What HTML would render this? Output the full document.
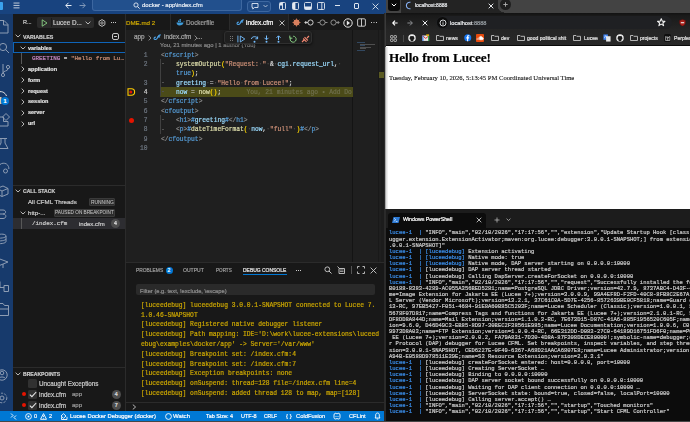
<!DOCTYPE html>
<html><head><meta charset="utf-8">
<style>
*{box-sizing:border-box;margin:0;padding:0}
html,body{width:690px;height:422px;overflow:hidden;background:#0c0c0c;font-family:"Liberation Sans",sans-serif;-webkit-text-stroke-width:0.2px}
.a{position:absolute}
.mono{font-family:"Liberation Mono",monospace}
.pre{white-space:pre;will-change:transform}
/* vscode */
#vs{left:0;top:0;width:384px;height:422px;background:#1f1f1f;overflow:hidden}
#title{left:0;top:0;width:384px;height:14px;background:#18437f}
#act{left:0;top:14px;width:13px;height:397px;background:#173a6c}
#side{left:13px;top:14px;width:113px;height:397px;background:#181818}
#tabs{left:126px;top:14px;width:258px;height:16px;background:#181818}
#editor{left:126px;top:30px;width:258px;height:232px;background:#1f1f1f}
#panel{left:126px;top:262px;width:258px;height:149px;background:#181818;border-top:1px solid #2b2b2b}
#status{left:0;top:411px;width:384px;height:10px;background:#0078d4}
/* browser */
#br{left:386px;top:0;width:304px;height:209px;background:#fff;overflow:hidden}
#brtabs{left:0;top:0;width:304px;height:12px;background:#3c3c3c}
#brtool{left:0;top:12px;width:304px;height:18px;background:#1f1f1f}
#brbm{left:0;top:30px;width:304px;height:16px;background:#1f1f1f}
/* terminal */
#term{left:386px;top:209px;width:304px;height:213px;background:#0c0c0c;overflow:hidden}
#ttabs{left:0;top:0;width:304px;height:19px;background:#202020}
</style></head><body>
<div id="vs" class="a">
  <div id="title" class="a">
    <div class="a" style="left:0;top:2px;width:3px;height:8px;background:#3aa2ee;border-radius:0 1px 1px 0"></div>
    <svg class="a" style="left:13px;top:2px" width="7" height="7" viewBox="0 0 7 7"><rect x="0.5" y="0.5" width="6" height="1.1" fill="#aebdd0"/><rect x="0.5" y="2.9" width="6" height="1.1" fill="#aebdd0"/><rect x="0.5" y="5.3" width="6" height="1.1" fill="#aebdd0"/></svg>
    <svg class="a" style="left:65px;top:2px" width="7" height="7" viewBox="0 0 7 7"><path d="M3.5 0.8 L0.8 3.5 L3.5 6.2 M0.8 3.5 H6.5" stroke="#e8eef6" stroke-width="1" fill="none"/></svg>
    <svg class="a" style="left:79px;top:2px" width="7" height="7" viewBox="0 0 7 7"><path d="M3.5 0.8 L6.2 3.5 L3.5 6.2 M6.2 3.5 H0.5" stroke="#7f97b8" stroke-width="1" fill="none"/></svg>
    <div class="a" style="left:92px;top:0px;width:150px;height:11px;background:#22508d;border:1px solid #3d67a0;border-top:none;border-radius:0 0 3px 3px"></div>
    <svg class="a" style="left:133px;top:2px" width="7" height="7" viewBox="0 0 7 7"><circle cx="3" cy="3" r="2.1" stroke="#dfe7f2" stroke-width="0.9" fill="none"/><path d="M4.5 4.5 L6.6 6.6" stroke="#dfe7f2" stroke-width="1"/></svg>
    <div class="a pre" style="left:142px;top:1px;font-size:6px;line-height:9px;color:#e6ecf4">docker - app\index.cfm</div>
    <div class="a" style="left:247px;top:1px;width:24px;height:11px;border:1px solid #3d67a0;border-radius:3px;background:#1f4a85"></div>
    <svg class="a" style="left:251px;top:2px" width="8" height="8" viewBox="0 0 8 8"><path d="M1 1.5 H7 V5.5 H3.5 L1.8 7 V5.5 H1 Z" stroke="#dfe7f2" stroke-width="0.9" fill="none"/></svg>
    <svg class="a" style="left:263px;top:4px" width="5" height="4" viewBox="0 0 5 4"><path d="M0.5 1 L2.5 3 L4.5 1" stroke="#c8d3e2" stroke-width="0.8" fill="none"/></svg>
    <svg class="a" style="left:279px;top:2px" width="7" height="8" viewBox="0 0 7 8"><rect x="0.5" y="0.5" width="6" height="7" rx="1" stroke="#e3e9f1" stroke-width="0.9" fill="none"/><path d="M3.5 0.5 V7.5" stroke="#e3e9f1" stroke-width="0.9"/><rect x="1" y="1" width="2.3" height="2.5" fill="#e3e9f1"/></svg>
    <svg class="a" style="left:291.5px;top:2px" width="7" height="8" viewBox="0 0 7 8"><rect x="0.5" y="0.5" width="6" height="7" rx="1" stroke="#e3e9f1" stroke-width="0.9" fill="none"/><rect x="0.8" y="0.8" width="2.6" height="6.4" fill="#e3e9f1"/></svg>
    <svg class="a" style="left:304px;top:2px" width="8" height="8" viewBox="0 0 8 8"><rect x="0.5" y="0.5" width="7" height="7" rx="1" stroke="#e3e9f1" stroke-width="0.9" fill="none"/><rect x="0.8" y="4.5" width="6.4" height="2.7" fill="#e3e9f1"/></svg>
    <svg class="a" style="left:316.5px;top:2px" width="8" height="8" viewBox="0 0 8 8"><rect x="0.5" y="0.5" width="7" height="7" rx="1" stroke="#e3e9f1" stroke-width="0.9" fill="none"/><path d="M4.8 0.5 V7.5" stroke="#e3e9f1" stroke-width="0.9"/></svg>
    <div class="a" style="left:335px;top:5px;width:5px;height:1px;background:#dde5ef"></div>
    <div class="a" style="left:353.5px;top:3px;width:5.5px;height:5.5px;border:1px solid #dde5ef;border-radius:1px"></div>
    <svg class="a" style="left:372px;top:2.5px" width="7" height="7" viewBox="0 0 7 7"><path d="M0.6 0.6 L6.4 6.4 M6.4 0.6 L0.6 6.4" stroke="#dde5ef" stroke-width="0.9"/></svg>
  </div>
  <div id="act" class="a">
    <svg class="a" style="left:0;top:0" width="13" height="397" viewBox="0 14 13 397" fill="none" stroke="#8d9cb3" stroke-width="1">
      <path d="M-3 20.5 H4 L8 24.5 V33 H-3 M3.5 20.5 V25 H8"/>
      <circle cx="3" cy="47" r="3.6"/><path d="M5.6 49.6 L9 53"/>
      <circle cx="8" cy="67" r="1.6"/><circle cx="3" cy="75" r="1.6"/><path d="M3 64 V73.4 M8 68.6 C8 72 3 70 3 73.4"/>
      <path d="M-3 92.5 C1 90.5 5 92 6.5 96" stroke="#e6e6e6"/><rect x="-1" y="97" width="2.5" height="7" fill="#d8c8b0" stroke="none"/>
      <path d="M-1 117 H3.5 V121.5 H8 V126 H-1 Z M6 113.5 L9.5 117 L6 120.5 L2.5 117 Z"/>
      <path d="M-2 138.5 H7 M1 138.5 V143 L-2 148.5 H8 L5 143 V138.5"/>
      <path d="M-3 172 C-3 165 2 161.5 6.5 164 C8.5 165.5 9 167.5 8.8 169"/><circle cx="5.5" cy="171" r="2"/>
      <path d="M-3 188.5 L3 186 L8 188.5 V194 L2 196.5 L-3 194 Z M-3 188.5 L2 191 L8 188.5 M2 191 V196.5"/>
      <path d="M-3 210 H3 C6.5 210 6.5 214 3 214 H-3 M3 214 C6.8 214 6.8 218.5 3 218.5 H-3"/>
      <path d="M-3 235 C1 233.5 6 234 6 236 C6 238 -1 238.5 -3 238 M6 236 V241.5 C6 243.5 -1 244 -3 243.5 M6 238.8 C6 240.8 -1 241.2 -3 240.8"/>
      <path d="M-3 258 L8 262 L-3 266.5 M3 264 V268"/>
      <path d="M0 281.5 V287.5 H4 M4 285.5 H8.5 V291.5 H4 Z"/>
      <path d="M-3 303.5 H3 L4.5 305.5 H8.5 V315.5 H-3 Z M-3 309 H8.5"/>
      <circle cx="2" cy="375" r="5.2"/><circle cx="2" cy="373" r="1.8"/><path d="M-1.5 378.5 C0 376.5 4 376.5 5.5 378.5"/>
      <circle cx="2" cy="398" r="2"/><circle cx="2" cy="398" r="4.8" stroke-dasharray="2.2 1.3"/>
    </svg>
    <div class="a" style="left:0.8px;top:82.8px;width:8.5px;height:8.5px;border-radius:50%;background:#0078d4;color:#fff;font-size:5.5px;line-height:8.5px;text-align:center;font-weight:bold">1</div>
  </div>
  <div id="side" class="a">
    <div class="a pre" style="left:10px;top:4px;font-size:5.5px;line-height:8px;color:#cccccc">R...</div>
    <div class="a" style="left:24px;top:3px;width:57px;height:11px;background:#2a2a2a;border-radius:2px"></div>
    <svg class="a" style="left:28px;top:5px" width="7" height="8" viewBox="0 0 7 8"><path d="M1.2 0.8 L6 4 L1.2 7.2 Z" stroke="#89d185" stroke-width="0.9" fill="none"/></svg>
    <div class="a" style="left:37.8px;top:4px;width:0.8px;height:9px;background:#1c1c1c"></div>
    <div class="a pre" style="left:40px;top:4.7px;font-size:6.3px;line-height:8px;color:#cccccc">Lucee D...</div>
    <svg class="a" style="left:72px;top:7px" width="6" height="4" viewBox="0 0 6 4"><path d="M0.6 0.7 L3 3 L5.4 0.7" stroke="#cccccc" stroke-width="0.9" fill="none"/></svg>
    <svg class="a" style="left:85px;top:5px" width="8" height="8" viewBox="0 0 8 8"><path d="M4 0.6 L6.9 2.3 V5.7 L4 7.4 L1.1 5.7 V2.3 Z" stroke="#cccccc" stroke-width="0.9" fill="none"/><circle cx="4" cy="4" r="1.2" stroke="#cccccc" stroke-width="0.8" fill="none"/></svg>
    <div class="a" style="left:98px;top:8px;width:1px;height:1px;background:#ccc;box-shadow:2px 0 #ccc,4px 0 #ccc"></div>
    <!-- VARIABLES header -->
    <svg class="a" style="left:2px;top:20px" width="6" height="4" viewBox="0 0 6 4"><path d="M0.6 0.7 L3 3 L5.4 0.7" stroke="#cccccc" stroke-width="0.9" fill="none"/></svg>
    <div class="a pre" style="left:10px;top:18.8px;font-size:5.3px;line-height:8px;color:#cccccc;font-weight:bold">VARIABLES</div>
    <div class="a" style="left:98.5px;top:18.8px;width:7.5px;height:7px;border:1px solid #c8c8c8;border-radius:2px"></div>
    <div class="a" style="left:100.5px;top:21.8px;width:3.5px;height:1px;background:#c8c8c8"></div>
    <!-- focus row -->
    <div class="a" style="left:0;top:28px;width:113px;height:11px;border:1px solid #0f64b8;background:#151515"></div>
    <svg class="a" style="left:7px;top:32px" width="6" height="4" viewBox="0 0 6 4"><path d="M0.6 0.7 L3 3 L5.4 0.7" stroke="#cccccc" stroke-width="0.9" fill="none"/></svg>
    <div class="a pre" style="left:14.5px;top:29.5px;font-size:5.5px;line-height:8px;color:#e0e0e0;font-weight:bold">variables</div>
    <div class="a" style="left:8px;top:39px;width:1px;height:11px;background:#585858"></div>
    <div class="a pre mono" style="left:19px;top:40.5px;font-size:5.9px;line-height:8px"><span style="color:#c586c0">GREETING</span><span style="color:#cccccc"> = </span><span style="color:#ce9178">"Hello from Lu…</span></div>
    <svg class="a" style="left:8px;top:52.3px" width="4" height="6" viewBox="0 0 4 6"><path d="M0.7 0.6 L3 3 L0.7 5.4" stroke="#cccccc" stroke-width="0.9" fill="none"/></svg>
    <div class="a pre" style="left:14.5px;top:50.8px;font-size:5.5px;line-height:8px;color:#e0e0e0;font-weight:bold">application</div>
    <svg class="a" style="left:8px;top:63.2px" width="4" height="6" viewBox="0 0 4 6"><path d="M0.7 0.6 L3 3 L0.7 5.4" stroke="#cccccc" stroke-width="0.9" fill="none"/></svg>
    <div class="a pre" style="left:14.5px;top:61.7px;font-size:5.5px;line-height:8px;color:#e0e0e0;font-weight:bold">form</div>
    <svg class="a" style="left:8px;top:74.0px" width="4" height="6" viewBox="0 0 4 6"><path d="M0.7 0.6 L3 3 L0.7 5.4" stroke="#cccccc" stroke-width="0.9" fill="none"/></svg>
    <div class="a pre" style="left:14.5px;top:72.5px;font-size:5.5px;line-height:8px;color:#e0e0e0;font-weight:bold">request</div>
    <svg class="a" style="left:8px;top:84.9px" width="4" height="6" viewBox="0 0 4 6"><path d="M0.7 0.6 L3 3 L0.7 5.4" stroke="#cccccc" stroke-width="0.9" fill="none"/></svg>
    <div class="a pre" style="left:14.5px;top:83.4px;font-size:5.5px;line-height:8px;color:#e0e0e0;font-weight:bold">session</div>
    <svg class="a" style="left:8px;top:95.7px" width="4" height="6" viewBox="0 0 4 6"><path d="M0.7 0.6 L3 3 L0.7 5.4" stroke="#cccccc" stroke-width="0.9" fill="none"/></svg>
    <div class="a pre" style="left:14.5px;top:94.2px;font-size:5.5px;line-height:8px;color:#e0e0e0;font-weight:bold">server</div>
    <svg class="a" style="left:8px;top:106.6px" width="4" height="6" viewBox="0 0 4 6"><path d="M0.7 0.6 L3 3 L0.7 5.4" stroke="#cccccc" stroke-width="0.9" fill="none"/></svg>
    <div class="a pre" style="left:14.5px;top:105.1px;font-size:5.5px;line-height:8px;color:#e0e0e0;font-weight:bold">url</div>
    <!-- CALL STACK -->
    <div class="a" style="left:0;top:171px;width:113px;height:1px;background:#2b2b2b"></div>
    <svg class="a" style="left:2px;top:175px" width="6" height="4" viewBox="0 0 6 4"><path d="M0.6 0.7 L3 3 L5.4 0.7" stroke="#cccccc" stroke-width="0.9" fill="none"/></svg>
    <div class="a pre" style="left:10px;top:173px;font-size:5.1px;line-height:8px;color:#cccccc;font-weight:bold">CALL STACK</div>
    <div class="a pre" style="left:15px;top:182.7px;font-size:6.1px;line-height:9px;color:#cccccc">All CFML Threads</div>
    <div class="a" style="left:76px;top:184px;width:26px;height:8px;background:#2c2c2c;border:1px solid #3a3a3a;border-radius:1px"></div>
    <div class="a pre" style="left:77.7px;top:184.5px;font-size:4.9px;line-height:7px;color:#c4c4c4;-webkit-text-stroke-width:0.05px">RUNNING</div>
    <svg class="a" style="left:7px;top:197px" width="6" height="4" viewBox="0 0 6 4"><path d="M0.6 0.7 L3 3 L5.4 0.7" stroke="#cccccc" stroke-width="0.9" fill="none"/></svg>
    <div class="a pre" style="left:15px;top:194px;font-size:6.1px;line-height:9px;color:#cccccc">http-...</div>
    <div class="a" style="left:41px;top:194.5px;width:61px;height:8px;background:#2c2c2c;border:1px solid #3a3a3a;border-radius:1px"></div>
    <div class="a pre" style="left:42px;top:195px;font-size:4.7px;line-height:7px;color:#c4c4c4;-webkit-text-stroke-width:0.05px">PAUSED ON BREAKPOINT</div>
    <div class="a" style="left:0;top:204px;width:113px;height:11px;background:#2d2d31"></div>
    <div class="a" style="left:8px;top:204px;width:1px;height:11px;background:#585858"></div>
    <div class="a pre mono" style="left:19px;top:205.5px;font-size:5.9px;line-height:8px;color:#cccccc">/index.cfm</div>
    <div class="a pre" style="left:66px;top:205.5px;font-size:6px;line-height:8px;color:#cccccc">index.cfm</div>
    <div class="a" style="left:98px;top:205px;width:9px;height:9px;border-radius:50%;background:#4d4d4d;color:#e0e0e0;font-size:5.3px;line-height:9px;text-align:center">4</div>
    <!-- BREAKPOINTS -->
    <div class="a" style="left:0;top:353px;width:113px;height:1px;background:#2b2b2b"></div>
    <svg class="a" style="left:2px;top:357.5px" width="6" height="4" viewBox="0 0 6 4"><path d="M0.6 0.7 L3 3 L5.4 0.7" stroke="#cccccc" stroke-width="0.9" fill="none"/></svg>
    <div class="a pre" style="left:10px;top:355.5px;font-size:5.1px;line-height:8px;color:#cccccc;font-weight:bold">BREAKPOINTS</div>
    <div class="a" style="left:15px;top:365px;width:9px;height:8.5px;background:#313131;border-radius:1.5px"></div>
    <div class="a pre" style="left:25.7px;top:364.8px;font-size:6.3px;line-height:9px;color:#cccccc">Uncaught Exceptions</div>
    <div class="a" style="left:8.5px;top:378px;width:4px;height:4px;border-radius:50%;background:#e51400"></div>
    <div class="a" style="left:15px;top:376px;width:9px;height:8.5px;background:#313131;border-radius:1.5px"></div>
    <svg class="a" style="left:15.8px;top:376.5px" width="8" height="7" viewBox="0 0 8 7"><path d="M0.8 3.6 L2.9 5.7 L7.2 1" stroke="#e8e8e8" stroke-width="1.1" fill="none"/></svg>
    <div class="a pre" style="left:25.7px;top:376px;font-size:6.3px;line-height:9px;color:#cccccc">index.cfm</div>
    <div class="a pre" style="left:58.8px;top:376px;font-size:6px;line-height:9px;color:#9d9d9d">app</div>
    <div class="a" style="left:98.8px;top:376px;width:9px;height:9px;border-radius:50%;background:#4d4d4d;color:#e0e0e0;font-size:5.3px;line-height:9px;text-align:center">4</div>
    <div class="a" style="left:8.5px;top:389px;width:4px;height:4px;border-radius:50%;background:#e51400"></div>
    <div class="a" style="left:15px;top:387px;width:9px;height:8.5px;background:#313131;border-radius:1.5px"></div>
    <svg class="a" style="left:15.8px;top:387.5px" width="8" height="7" viewBox="0 0 8 7"><path d="M0.8 3.6 L2.9 5.7 L7.2 1" stroke="#e8e8e8" stroke-width="1.1" fill="none"/></svg>
    <div class="a pre" style="left:25.7px;top:387px;font-size:6.3px;line-height:9px;color:#cccccc">index.cfm</div>
    <div class="a pre" style="left:58.8px;top:387px;font-size:6px;line-height:9px;color:#9d9d9d">app</div>
    <div class="a" style="left:98.8px;top:387px;width:9px;height:9px;border-radius:50%;background:#4d4d4d;color:#e0e0e0;font-size:5.3px;line-height:9px;text-align:center">7</div>
    <div class="a" style="left:112px;top:0;width:1px;height:397px;background:#2b2b2b"></div>
  </div>
  <div id="editor" class="a"></div>
  <!-- tabs -->
  <div class="a" style="left:126px;top:14px;width:258px;height:16px;background:#181818"></div>
  <div class="a pre" style="left:126.4px;top:18.5px;font-size:6.2px;line-height:8px;color:#cca700">DME.md 2</div>
  <div class="a" style="left:170px;top:14px;width:1px;height:16px;background:#2b2b2b"></div>
  <svg class="a" style="left:176px;top:19px" width="9" height="7" viewBox="0 0 9 7"><path d="M0.5 3.5 H7.5 C7.5 5.5 5.5 6.5 3.5 6.5 C1.5 6.5 0.5 5 0.5 3.5 Z M2 1.5 h1.3 v1.5 h-1.3 z M3.6 1.5 h1.3 v1.5 h-1.3 z M3.6 0 h1.3 v1.3 h-1.3 z M7 3 C7.5 2 8.3 2 8.8 2.5" fill="#3d9ad8" stroke="none"/></svg>
  <div class="a pre" style="left:186.2px;top:18.5px;font-size:6.4px;line-height:8px;color:#9d9d9d">Dockerfile</div>
  <div class="a" style="left:229px;top:14px;width:1px;height:16px;background:#2b2b2b"></div>
  <div class="a" style="left:230px;top:14px;width:58px;height:16px;background:#1f1f1f"></div>
  <div class="a" style="left:288px;top:14px;width:1px;height:16px;background:#2b2b2b"></div>
  <svg class="a" style="left:235.5px;top:19.3px" width="8" height="6.5" viewBox="0 0 8 6.5"><path d="M7.3 0.9 C5.6 0.9 5 2.5 4.5 3.8 C4 5.2 2.6 5.8 1.5 5.3 C0.6 4.8 1 3.4 2.4 3.1 M4.6 2.9 H6.6" stroke="#4da3e8" stroke-width="1.1" fill="none" stroke-linecap="round"/></svg>
  <div class="a pre" style="left:245.5px;top:18.5px;font-size:6.4px;line-height:8px;color:#ffffff">index.cfm</div>
  <svg class="a" style="left:279px;top:20px" width="6" height="6" viewBox="0 0 6 6"><path d="M0.6 0.6 L5.4 5.4 M5.4 0.6 L0.6 5.4" stroke="#d0d0d0" stroke-width="0.9"/></svg>
  <!-- tab actions -->
  <svg class="a" style="left:292px;top:18px" width="9" height="9" viewBox="0 0 9 9"><g stroke="#d9805e" stroke-width="0.8"><path d="M4.5 0.5 V8.5 M0.5 4.5 H8.5 M1.7 1.7 L7.3 7.3 M7.3 1.7 L1.7 7.3"/></g><circle cx="4.5" cy="4.5" r="3" fill="#d9805e"/></svg>
  <svg class="a" style="left:304px;top:19px" width="10" height="7" viewBox="0 0 10 7"><circle cx="6.5" cy="3.5" r="2.6" stroke="#e0e0e0" stroke-width="0.9" fill="none"/><path d="M3.9 3.5 H1 M2.3 2 L0.8 3.5 L2.3 5" stroke="#e0e0e0" stroke-width="0.9" fill="none"/></svg>
  <svg class="a" style="left:317px;top:19px" width="11" height="7" viewBox="0 0 11 7"><circle cx="5.5" cy="3.5" r="2.6" stroke="#9a9a9a" stroke-width="0.9" fill="none"/><path d="M2.9 3.5 H0.5 M8.1 3.5 H10.5" stroke="#9a9a9a" stroke-width="0.9"/></svg>
  <svg class="a" style="left:330px;top:19px" width="10" height="7" viewBox="0 0 10 7"><circle cx="3.5" cy="3.5" r="2.6" stroke="#9a9a9a" stroke-width="0.9" fill="none"/><path d="M6.1 3.5 H9 M7.7 2 L9.2 3.5 L7.7 5" stroke="#9a9a9a" stroke-width="0.9" fill="none"/></svg>
  <svg class="a" style="left:343px;top:17.5px" width="10" height="10" viewBox="0 0 10 10"><circle cx="5" cy="5" r="4.2" stroke="#e8e8e8" stroke-width="1" fill="none"/><path d="M3.8 2.5 V7.5 L7 5 Z" fill="#e8e8e8"/></svg>
  <svg class="a" style="left:356.5px;top:18px" width="9" height="9" viewBox="0 0 9 9"><rect x="0.6" y="0.8" width="7.8" height="7.4" rx="1.2" stroke="#d8d8d8" stroke-width="0.9" fill="none"/><path d="M4.5 0.8 V8.2" stroke="#d8d8d8" stroke-width="0.9"/></svg>
  <div class="a" style="left:370.5px;top:22px;width:1px;height:1px;background:#ccc;box-shadow:2.5px 0 #ccc,5px 0 #ccc"></div>
  <!-- breadcrumbs -->
  <div class="a pre" style="left:133.9px;top:33px;font-size:6.4px;line-height:8px;color:#a9a9a9">app</div>
  <svg class="a" style="left:148px;top:34.5px" width="4" height="6" viewBox="0 0 4 6"><path d="M0.7 0.6 L3 3 L0.7 5.4" stroke="#a9a9a9" stroke-width="0.8" fill="none"/></svg>
  <svg class="a" style="left:153px;top:34px" width="8" height="6.5" viewBox="0 0 8 6.5"><path d="M7.3 0.9 C5.6 0.9 5 2.5 4.5 3.8 C4 5.2 2.6 5.8 1.5 5.3 C0.6 4.8 1 3.4 2.4 3.1 M4.6 2.9 H6.6" stroke="#4da3e8" stroke-width="1.1" fill="none" stroke-linecap="round"/></svg>
  <div class="a pre" style="left:163.9px;top:33px;font-size:6.4px;line-height:8px;color:#a9a9a9">index.cfm</div>
  <svg class="a" style="left:193.5px;top:34.5px" width="4" height="6" viewBox="0 0 4 6"><path d="M0.7 0.6 L3 3 L0.7 5.4" stroke="#a9a9a9" stroke-width="0.8" fill="none"/></svg>
  <div class="a pre" style="left:196.8px;top:33px;font-size:6.4px;line-height:8px;color:#a9a9a9">...</div>
  <!-- codelens -->
  <div class="a pre" style="left:160px;top:41.5px;font-size:5.9px;line-height:7px;color:#8a8a8a">You, 21 minutes ago | 1 author (You)</div>
  <!-- gutter markers -->
  <svg class="a" style="left:127px;top:88px" width="9" height="8" viewBox="0 0 9 8"><path d="M1 0.8 H4.5 C6.5 0.8 7.6 2.5 7.6 4 C7.6 5.5 6.5 7.2 4.5 7.2 H1 Z" stroke="#ffcc00" stroke-width="1.1" fill="none"/><circle cx="3.8" cy="4" r="1.5" fill="#e51400"/></svg>
  <div class="a" style="left:129px;top:117.5px;width:5px;height:5px;border-radius:50%;background:#e51400"></div>
  <!-- minimap -->
  <div class="a" style="left:352px;top:30px;width:1px;height:232px;background:#141414"></div>
  <div class="a" style="left:357px;top:42px;width:18px;height:9px;opacity:.45;background:
    linear-gradient(#4a7bb0,#4a7bb0) 0 0/8px 1px no-repeat,
    linear-gradient(#8a8a8a,#8a8a8a) 3px 1.5px/15px 1px no-repeat,
    linear-gradient(#4a7bb0,#4a7bb0) 3px 3px/5px 1px no-repeat,
    linear-gradient(#8a8a8a,#8a8a8a) 3px 4.5px/11px 1px no-repeat,
    linear-gradient(#8a8a8a,#8a8a8a) 3px 6px/6px 1px no-repeat,
    linear-gradient(#4a7bb0,#4a7bb0) 0 7.5px/8px 1px no-repeat"></div>
  <div class="a" style="left:378px;top:30px;width:1px;height:232px;background:#191919"></div><div class="a" style="left:381px;top:30px;width:3px;height:232px;background:#1c1c1c"></div>
  <div class="a" style="left:379px;top:72px;width:5px;height:6px;background:#5a5a22"></div>
  <!-- debug toolbar -->
  <div class="a" style="left:224px;top:31px;width:88px;height:13px;background:#1f1f1f;border:1px solid #2f2f2f;border-radius:3px;box-shadow:0 1px 3px rgba(0,0,0,.6)"></div>
  <div class="a" style="left:229.5px;top:36px;width:1px;height:1px;background:#777;box-shadow:2px 0 #777,0 2px #777,2px 2px #777,0 4px #777,2px 4px #777"></div>
  <svg class="a" style="left:237px;top:34.5px" width="9" height="8" viewBox="0 0 9 8"><path d="M0.9 0.6 V7.4" stroke="#75beff" stroke-width="0.9"/><path d="M3.3 1 L7.8 4 L3.3 7 Z" stroke="#75beff" stroke-width="0.9" fill="none" stroke-linejoin="round"/></svg>
  <svg class="a" style="left:250px;top:34.5px" width="9" height="8" viewBox="0 0 9 8"><path d="M1.5 4 C1.5 1 7 1 7.5 3.5 M7.6 1.5 V3.8 H5.4" stroke="#75beff" stroke-width="1" fill="none"/><circle cx="4.5" cy="6.8" r="1" fill="#75beff"/></svg>
  <svg class="a" style="left:263px;top:34.5px" width="7" height="8" viewBox="0 0 7 8"><path d="M3.5 0.5 V4.5 M1.5 2.8 L3.5 4.8 L5.5 2.8" stroke="#75beff" stroke-width="1" fill="none"/><circle cx="3.5" cy="6.8" r="1" fill="#75beff"/></svg>
  <svg class="a" style="left:275px;top:34.5px" width="7" height="8" viewBox="0 0 7 8"><path d="M3.5 5 V1 M1.5 2.8 L3.5 0.8 L5.5 2.8" stroke="#75beff" stroke-width="1" fill="none"/><circle cx="3.5" cy="6.8" r="1" fill="#75beff"/></svg>
  <svg class="a" style="left:288.5px;top:34.5px" width="8" height="8" viewBox="0 0 8 8"><path d="M1.6 2.6 A3 3 0 1 0 4.2 1.2" stroke="#89d185" stroke-width="1" fill="none"/><path d="M0.8 0.6 V3.2 H3.4" stroke="#89d185" stroke-width="1" fill="none"/></svg>
  <svg class="a" style="left:301px;top:34.5px" width="9" height="8" viewBox="0 0 9 8"><path d="M1 7 L3 5 M8 1 L6 3 M2.2 3.5 L5.5 6.8 M3.5 2.2 L6.8 5.5" stroke="#f48771" stroke-width="1.1" fill="none"/></svg>
<div class="a" style="left:160px;top:87px;width:193px;height:9.5px;background:#4b4b18"></div>
<div class="a" style="left:160px;top:58.97px;width:1px;height:37.48px;background:#404040"></div>
<div class="a" style="left:160px;top:115.19px;width:1px;height:18.74px;background:#404040"></div>
<div class="a mono pre" style="left:127px;top:50.50px;width:20.5px;text-align:right;font-size:6.28px;line-height:9.37px;color:#6e7681">1</div>
<div class="a mono pre" style="left:160.60px;top:50.50px;font-size:6.28px;line-height:9.37px"><span style="color:#8c8c8c">&lt;</span><span style="color:#569cd6">cfscript</span><span style="color:#8c8c8c">&gt;</span></div>
<div class="a mono pre" style="left:127px;top:59.87px;width:20.5px;text-align:right;font-size:6.28px;line-height:9.37px;color:#6e7681">2</div>
<div class="a" style="left:162px;top:63.17px;width:2px;height:1px;background:#505050"></div>
<div class="a mono pre" style="left:175.68px;top:59.87px;font-size:6.28px;line-height:9.37px"><span style="color:#dcdcaa">systemOutput</span><span style="color:#ffd700">(</span><span style="color:#ce9178">"Request:</span><span style="color:#4a4a4a">·</span><span style="color:#ce9178">"</span><span style="color:#4a4a4a">·</span><span style="color:#d4d4d4">&amp;</span><span style="color:#4a4a4a">·</span><span style="color:#9cdcfe">cgi</span><span style="color:#d4d4d4">.</span><span style="color:#9cdcfe">request_url</span><span style="color:#d4d4d4">,</span><span style="color:#4a4a4a">·</span></div>
<div class="a mono pre" style="left:175.68px;top:69.24px;font-size:6.28px;line-height:9.37px"><span style="color:#569cd6">true</span><span style="color:#ffd700">)</span><span style="color:#d4d4d4">;</span></div>
<div class="a mono pre" style="left:127px;top:78.61px;width:20.5px;text-align:right;font-size:6.28px;line-height:9.37px;color:#6e7681">3</div>
<div class="a" style="left:162px;top:81.91px;width:2px;height:1px;background:#505050"></div>
<div class="a mono pre" style="left:175.68px;top:78.61px;font-size:6.28px;line-height:9.37px"><span style="color:#9cdcfe">greeting</span><span style="color:#4a4a4a">·</span><span style="color:#d4d4d4">=</span><span style="color:#4a4a4a">·</span><span style="color:#ce9178">"Hello</span><span style="color:#4a4a4a">·</span><span style="color:#ce9178">from</span><span style="color:#4a4a4a">·</span><span style="color:#ce9178">Lucee!"</span><span style="color:#d4d4d4">;</span></div>
<div class="a mono pre" style="left:127px;top:87.98px;width:20.5px;text-align:right;font-size:6.28px;line-height:9.37px;color:#cccccc">4</div>
<div class="a" style="left:162px;top:91.28px;width:2px;height:1px;background:#505050"></div>
<div class="a mono pre" style="left:175.68px;top:87.98px;font-size:6.28px;line-height:9.37px"><span style="color:#9cdcfe">now</span><span style="color:#4a4a4a">·</span><span style="color:#d4d4d4">=</span><span style="color:#4a4a4a">·</span><span style="color:#dcdcaa">now</span><span style="color:#ffd700">()</span><span style="color:#d4d4d4">;</span><span style="margin-left:25.4px;color:#6f6f4e">You, 21 minutes ago • Add Do</span></div>
<div class="a mono pre" style="left:127px;top:97.35px;width:20.5px;text-align:right;font-size:6.28px;line-height:9.37px;color:#6e7681">5</div>
<div class="a mono pre" style="left:160.60px;top:97.35px;font-size:6.28px;line-height:9.37px"><span style="color:#8c8c8c">&lt;/</span><span style="color:#569cd6">cfscript</span><span style="color:#8c8c8c">&gt;</span></div>
<div class="a mono pre" style="left:127px;top:106.72px;width:20.5px;text-align:right;font-size:6.28px;line-height:9.37px;color:#6e7681">6</div>
<div class="a mono pre" style="left:160.60px;top:106.72px;font-size:6.28px;line-height:9.37px"><span style="color:#8c8c8c">&lt;</span><span style="color:#569cd6">cfoutput</span><span style="color:#8c8c8c">&gt;</span></div>
<div class="a mono pre" style="left:127px;top:116.09px;width:20.5px;text-align:right;font-size:6.28px;line-height:9.37px;color:#6e7681">7</div>
<div class="a" style="left:162px;top:119.39px;width:2px;height:1px;background:#505050"></div>
<div class="a mono pre" style="left:175.68px;top:116.09px;font-size:6.28px;line-height:9.37px"><span style="color:#8c8c8c">&lt;</span><span style="color:#569cd6">h1</span><span style="color:#8c8c8c">&gt;</span><span style="color:#569cd6">#</span><span style="color:#9cdcfe">greeting</span><span style="color:#569cd6">#</span><span style="color:#8c8c8c">&lt;/</span><span style="color:#569cd6">h1</span><span style="color:#8c8c8c">&gt;</span></div>
<div class="a mono pre" style="left:127px;top:125.46px;width:20.5px;text-align:right;font-size:6.28px;line-height:9.37px;color:#6e7681">8</div>
<div class="a" style="left:162px;top:128.76px;width:2px;height:1px;background:#505050"></div>
<div class="a mono pre" style="left:175.68px;top:125.46px;font-size:6.28px;line-height:9.37px"><span style="color:#8c8c8c">&lt;</span><span style="color:#569cd6">p</span><span style="color:#8c8c8c">&gt;</span><span style="color:#569cd6">#</span><span style="color:#dcdcaa">dateTimeFormat</span><span style="color:#ffd700">(</span><span style="color:#4a4a4a">·</span><span style="color:#9cdcfe">now</span><span style="color:#d4d4d4">,</span><span style="color:#4a4a4a">·</span><span style="color:#ce9178">"full"</span><span style="color:#4a4a4a">·</span><span style="color:#ffd700">)</span><span style="color:#569cd6">#</span><span style="color:#8c8c8c">&lt;/</span><span style="color:#569cd6">p</span><span style="color:#8c8c8c">&gt;</span></div>
<div class="a mono pre" style="left:127px;top:134.83px;width:20.5px;text-align:right;font-size:6.28px;line-height:9.37px;color:#6e7681">9</div>
<div class="a mono pre" style="left:160.60px;top:134.83px;font-size:6.28px;line-height:9.37px"><span style="color:#8c8c8c">&lt;/</span><span style="color:#569cd6">cfoutput</span><span style="color:#8c8c8c">&gt;</span></div>
<div class="a mono pre" style="left:127px;top:144.20px;width:20.5px;text-align:right;font-size:6.28px;line-height:9.37px;color:#6e7681">10</div>

  <div id="panel" class="a"></div>
  <!-- panel -->
  <div class="a pre" style="left:136px;top:266.5px;font-size:4.9px;line-height:7px;color:#9d9d9d">PROBLEMS</div>
  <div class="a" style="left:165.5px;top:266.5px;width:7px;height:7px;border-radius:50%;background:#0078d4;color:#fff;font-size:5px;line-height:7px;text-align:center">2</div>
  <div class="a pre" style="left:183.3px;top:266.5px;font-size:5.05px;line-height:7px;color:#9d9d9d">OUTPUT</div>
  <div class="a pre" style="left:215.6px;top:266.5px;font-size:4.6px;line-height:7px;color:#9d9d9d">PORTS</div>
  <div class="a pre" style="left:243px;top:266.5px;font-size:4.97px;line-height:7px;color:#e7e7e7">DEBUG CONSOLE</div>
  <div class="a" style="left:243px;top:274px;width:43.5px;height:1px;background:#0078d4"></div>
  <div class="a" style="left:295.5px;top:270px;width:1px;height:1px;background:#ccc;box-shadow:2px 0 #ccc,4px 0 #ccc"></div>
  <svg class="a" style="left:324px;top:266px" width="8" height="8" viewBox="0 0 8 8"><circle cx="3.3" cy="3.3" r="2.4" stroke="#cccccc" stroke-width="0.9" fill="none"/><path d="M5 5 L7.5 7.5" stroke="#cccccc" stroke-width="1"/></svg>
  <svg class="a" style="left:337px;top:266px" width="8" height="8" viewBox="0 0 8 8"><path d="M2 2.5 H7.5 V7.5 H2 Z" stroke="#cccccc" stroke-width="0.9" fill="none"/><path d="M3 4 H6.5 M3 5.5 H6.5" stroke="#cccccc" stroke-width="0.7"/><path d="M0.5 0.5 L2.5 2.5" stroke="#cccccc" stroke-width="0.9"/></svg>
  <div class="a" style="left:351px;top:266px;width:1px;height:8px;background:#555"></div>
  <svg class="a" style="left:357px;top:266px" width="8" height="8" viewBox="0 0 8 8"><path d="M0.5 2.5 V0.5 H2.5 M5.5 0.5 H7.5 V2.5 M7.5 5.5 V7.5 H5.5 M2.5 7.5 H0.5 V5.5" stroke="#cccccc" stroke-width="0.9" fill="none"/></svg>
  <svg class="a" style="left:370px;top:266.5px" width="7" height="7" viewBox="0 0 7 7"><path d="M0.6 0.6 L6.4 6.4 M6.4 0.6 L0.6 6.4" stroke="#cccccc" stroke-width="0.9"/></svg>
  <div class="a" style="left:136px;top:283.5px;width:239px;height:11.5px;background:#2a2a2a;border-radius:2px"></div>
  <div class="a pre" style="left:139.6px;top:286.5px;font-size:5.75px;line-height:8px;color:#8f8f8f">Filter (e.g. text, !exclude, \escape)</div>
  <div class="a" style="left:126px;top:401.5px;width:258px;height:1px;background:#2b2b2b"></div>
  <svg class="a" style="left:132px;top:403.5px" width="5" height="6" viewBox="0 0 5 6"><path d="M0.8 0.6 L3.6 3 L0.8 5.4" stroke="#c5c5c5" stroke-width="0.9" fill="none"/></svg>
  <div class="a mono pre" style="left:141px;top:300.70px;font-size:6.3px;line-height:9.8px;color:#cca700">[luceedebug] luceedebug 3.0.0.1-SNAPSHOT connected to Lucee 7.</div>
  <div class="a mono pre" style="left:141px;top:310.50px;font-size:6.3px;line-height:9.8px;color:#cca700">1.0.46-SNAPSHOT</div>
  <div class="a mono pre" style="left:141px;top:320.30px;font-size:6.3px;line-height:9.8px;color:#cca700">[luceedebug] Registered native debugger listener</div>
  <div class="a mono pre" style="left:141px;top:330.10px;font-size:6.3px;line-height:9.8px;color:#cca700">[luceedebug] Path mapping: IDE='D:\work\lucee-extensions\luceed</div>
  <div class="a mono pre" style="left:141px;top:339.90px;font-size:6.3px;line-height:9.8px;color:#cca700">ebug\examples\docker/app' -&gt; Server='/var/www'</div>
  <div class="a mono pre" style="left:141px;top:349.70px;font-size:6.3px;line-height:9.8px;color:#cca700">[luceedebug] Breakpoint set: /index.cfm:4</div>
  <div class="a mono pre" style="left:141px;top:359.50px;font-size:6.3px;line-height:9.8px;color:#cca700">[luceedebug] Breakpoint set: /index.cfm:7</div>
  <div class="a mono pre" style="left:141px;top:369.30px;font-size:6.3px;line-height:9.8px;color:#cca700">[luceedebug] Exception breakpoints: none</div>
  <div class="a mono pre" style="left:141px;top:379.10px;font-size:6.3px;line-height:9.8px;color:#cca700">[luceedebug] onSuspend: thread=128 file=/index.cfm line=4</div>
  <div class="a mono pre" style="left:141px;top:388.90px;font-size:6.3px;line-height:9.8px;color:#cca700">[luceedebug] onSuspend: added thread 128 to map, map=[128]</div>

  <div id="status" class="a">
    <svg class="a" style="left:9.5px;top:1.5px" width="7" height="7" viewBox="0 0 7 7"><path d="M1 0.5 L3 2.5 L1 4.5 M6 2.5 L4 4.5 L6 6.5" stroke="#fff" stroke-width="0.9" fill="none"/></svg>
    <svg class="a" style="left:25px;top:1.5px" width="7" height="7" viewBox="0 0 7 7"><circle cx="3.5" cy="3.5" r="2.9" stroke="#fff" stroke-width="0.9" fill="none"/><circle cx="3.5" cy="3.5" r="1" fill="#fff"/></svg>
    <div class="a pre" style="left:34px;top:1px;font-size:5.6px;line-height:8px;color:#fff">0</div>
    <svg class="a" style="left:40px;top:1.5px" width="7" height="7" viewBox="0 0 7 7"><path d="M3.5 0.6 L6.5 6.3 H0.5 Z" stroke="#fff" stroke-width="0.9" fill="none"/><path d="M3.5 2.5 V4.2 M3.5 5 V5.6" stroke="#fff" stroke-width="0.8"/></svg>
    <div class="a pre" style="left:48.6px;top:1px;font-size:5.6px;line-height:8px;color:#fff">2</div>
    <svg class="a" style="left:60px;top:1.5px" width="8" height="7" viewBox="0 0 8 7"><path d="M1 3 L3.5 0.7 L6 3 L3.5 5.3 Z M1.5 4.2 V6.5 H7 V3.8" stroke="#fff" stroke-width="0.9" fill="none"/></svg>
    <div class="a pre" style="left:69.7px;top:1px;font-size:5.82px;line-height:8px;color:#fff">Lucee Docker Debugger (docker)</div>
    <svg class="a" style="left:164.5px;top:1.5px" width="7" height="7" viewBox="0 0 7 7"><circle cx="3.5" cy="3.5" r="2.9" stroke="#fff" stroke-width="0.9" fill="none"/></svg>
    <div class="a pre" style="left:172.6px;top:1px;font-size:6.1px;line-height:8px;color:#fff">Watch</div>
    <div class="a pre" style="left:206px;top:1px;font-size:5.46px;line-height:8px;color:#fff">Tab Size: 4</div>
    <div class="a pre" style="left:240.9px;top:1px;font-size:5.5px;line-height:8px;color:#fff">UTF-8</div>
    <div class="a pre" style="left:263.8px;top:1px;font-size:5px;line-height:8px;color:#fff">CRLF</div>
    <div class="a pre" style="left:285.5px;top:1px;font-size:6px;line-height:8px;color:#fff">{ }</div>
    <div class="a pre" style="left:295.8px;top:1px;font-size:5.8px;line-height:8px;color:#fff">ColdFusion</div>
    <svg class="a" style="left:333px;top:1px" width="8" height="8" viewBox="0 0 8 8"><path d="M1 3 C1 1 3 0.8 4 2 C5 0.8 7 1 7 3 V5.5 C7 7 5.5 7.5 4 6.5 C2.5 7.5 1 7 1 5.5 Z" stroke="#fff" stroke-width="0.9" fill="none"/><path d="M3 4 V5 M5 4 V5" stroke="#fff" stroke-width="0.8"/></svg>
    <div class="a pre" style="left:348.7px;top:1px;font-size:5.67px;line-height:8px;color:#fff">CFLint</div>
    <svg class="a" style="left:373.5px;top:1px" width="7" height="8" viewBox="0 0 7 8"><path d="M1 6 H6 L5.3 5 V3 C5.3 1.8 4.5 1 3.5 1 C2.5 1 1.7 1.8 1.7 3 V5 Z M2.7 7 H4.3" stroke="#fff" stroke-width="0.9" fill="none"/></svg>
  </div>
  
</div>
<div id="br" class="a">
  <div class="a" style="left:0;top:0;width:304px;height:13px;background:#434343"></div>
  <div class="a" style="left:2px;top:0;width:11.5px;height:10.5px;background:#0a0a0a;border-radius:0 0 3px 3px"></div>
  <svg class="a" style="left:5px;top:3px" width="6" height="4" viewBox="0 0 6 4"><path d="M0.8 0.8 L3 3 L5.2 0.8" stroke="#fff" stroke-width="1" fill="none"/></svg>
  <div class="a" style="left:15px;top:0;width:97px;height:13px;background:#232323;border-radius:0 0 0 0"></div>
  <div class="a" style="left:112px;top:6px;width:6px;height:7px;background:radial-gradient(circle at 100% 0,#434343 6px,#232323 6.5px)"></div>
  <svg class="a" style="left:18.5px;top:1px" width="7" height="9" viewBox="0 0 7 9"><path d="M5.5 1.3 A3.3 3.3 0 1 0 5.5 7.7" stroke="#8ab4f8" stroke-width="1.1" fill="none"/></svg>
  <div class="a pre" style="left:29px;top:1.3px;font-size:5px;line-height:8px;color:#e8eaed">localhost:8888</div>
  <svg class="a" style="left:102px;top:2.5px" width="6" height="6" viewBox="0 0 6 6"><path d="M0.7 0.7 L5.3 5.3 M5.3 0.7 L0.7 5.3" stroke="#e8eaed" stroke-width="1"/></svg>
  <div class="a" style="left:114.3px;top:-0.7px;width:11px;height:11px;border-radius:50%;background:#1e1e1e"></div>
  <svg class="a" style="left:117.3px;top:2.3px" width="5" height="5" viewBox="0 0 5 5"><path d="M2.5 0.3 V4.7 M0.3 2.5 H4.7" stroke="#b0b0b0" stroke-width="0.9"/></svg>
  <!-- toolbar -->
  <div class="a" style="left:0;top:13px;width:304px;height:33px;background:linear-gradient(#121212 0px,#1a1a1a 3px,#252525 17px,#282828 33px)"></div>
  <svg class="a" style="left:5.5px;top:19.5px" width="6" height="6" viewBox="0 0 6 6"><path d="M3 0.6 L0.7 3 L3 5.4 M0.7 3 H5.6" stroke="#ffffff" stroke-width="1.15" fill="none"/></svg>
  <svg class="a" style="left:20.5px;top:19.5px" width="6" height="6" viewBox="0 0 6 6"><path d="M3 0.6 L5.3 3 L3 5.4 M5.3 3 H0.4" stroke="#8a8c8f" stroke-width="1" fill="none"/></svg>
  <svg class="a" style="left:35.5px;top:19.5px" width="6" height="6" viewBox="0 0 6 6"><path d="M0.7 0.7 L5.3 5.3 M5.3 0.7 L0.7 5.3" stroke="#e8eaed" stroke-width="1"/></svg>
  <div class="a" style="left:49.5px;top:15.5px;width:236px;height:13.5px;background:#1f2023;border-radius:7px"></div>
  <div class="a" style="left:50.5px;top:16.5px;width:11.5px;height:11.5px;background:#0c0c0c;border-radius:50%"></div>
  <svg class="a" style="left:52.5px;top:18.5px" width="8" height="8" viewBox="0 0 8 8"><circle cx="4" cy="4" r="3" stroke="#e8eaed" stroke-width="0.9" fill="none"/><path d="M4 3.3 V5.8 M4 2.2 V2.6" stroke="#e8eaed" stroke-width="0.9"/></svg>
  <div class="a pre" style="left:63.6px;top:18.6px;font-size:5.66px;line-height:8px;color:#e8eaed">localhost<span style="color:#9aa0a6">:8888</span></div>
  <svg class="a" style="left:271px;top:18px" width="8.5" height="8.5" viewBox="0 0 8 8"><path d="M4 0.6 L5 3 L7.5 3.1 L5.5 4.7 L6.2 7.2 L4 5.8 L1.8 7.2 L2.5 4.7 L0.5 3.1 L3 3 Z" stroke="#f0f0f0" stroke-width="1" fill="none" stroke-linejoin="round"/></svg>
  <svg class="a" style="left:292.8px;top:18.8px" width="7" height="7.5" viewBox="0 0 8 9"><path d="M4 0.5 L7.5 1.8 V4.5 C7.5 6.5 6 7.8 4 8.5 C2 7.8 0.5 6.5 0.5 4.5 V1.8 Z" fill="#a8201a" stroke="#5a0e0e" stroke-width="0.6"/><rect x="2" y="3.8" width="4" height="1.3" fill="#f0f0f0"/></svg>
  <!-- bookmarks -->
  <svg class="a" style="left:4px;top:34.5px" width="7" height="7" viewBox="0 0 8 8" fill="none" stroke="#c8c8c8" stroke-width="1"><rect x="0.6" y="0.6" width="2.8" height="2.8" rx="0.8"/><rect x="4.6" y="0.6" width="2.8" height="2.8" rx="0.8"/><rect x="0.6" y="4.6" width="2.8" height="2.8" rx="0.8"/><rect x="4.6" y="4.6" width="2.8" height="2.8" rx="0.8"/></svg>
  <div class="a" style="left:17px;top:34.5px;width:1px;height:7px;background:#4a4a4a"></div>
  <svg class="a" style="left:22.3px;top:34px" width="8" height="8" viewBox="0 0 9 9"><circle cx="4.5" cy="4.5" r="4.2" fill="#f0f0f0"/><path d="M3 8.2 V6.6 C2 6.4 1.8 5.6 1.8 4.6 C1.8 3.8 2.2 3.2 2.6 3 L2.5 1.9 L3.6 2.5 C4.2 2.3 4.8 2.3 5.4 2.5 L6.5 1.9 L6.4 3 C6.8 3.2 7.2 3.8 7.2 4.6 C7.2 5.6 7 6.4 6 6.6 V8.2" fill="#1a1a1a"/></svg>
  <svg class="a" style="left:36px;top:34px" width="7.5" height="8" viewBox="0 0 9 9"><rect x="0.5" y="1.5" width="8" height="6.5" fill="#e8e8e8"/><path d="M0.5 1.5 L4.5 5 L8.5 1.5" stroke="#d93025" stroke-width="1.2" fill="none"/><rect x="0.5" y="1.5" width="1.3" height="6.5" fill="#4285f4"/><rect x="7.2" y="1.5" width="1.3" height="6.5" fill="#34a853"/><rect x="5" y="0.2" width="3.5" height="1.6" fill="#fbbc04"/></svg>
  <svg class="a" style="left:50.1px;top:35px" width="8" height="6" viewBox="0 0 8 6"><path d="M0.5 0.5 H3 L3.8 1.3 H7.5 V5.5 H0.5 Z" stroke="#c4c4c4" stroke-width="0.9" fill="none"/></svg>
  <div class="a pre" style="left:60px;top:34px;font-size:5.1px;line-height:8px;color:#e3e3e3">news</div>
  <svg class="a" style="left:78px;top:34.2px" width="7.5" height="7.5" viewBox="0 0 9 9"><circle cx="4.5" cy="4.5" r="4.2" fill="#1877f2"/><path d="M5 8.6 V5.3 H6.1 L6.3 4 H5 V3.3 C5 2.9 5.2 2.7 5.6 2.7 H6.3 V1.6 C6 1.5 5.6 1.5 5.2 1.5 C4.2 1.5 3.7 2.1 3.7 3.1 V4 H2.7 V5.3 H3.7 V8.6" fill="#fff"/></svg>
  <svg class="a" style="left:90.4px;top:34px" width="8" height="8" viewBox="0 0 9 9"><rect x="0" y="0" width="9" height="9" rx="1" fill="#e84a0c"/><path d="M1.2 6.5 V5 M2.4 6.5 V4.2 M3.6 6.5 V3.5 M4.3 6.5 V3 C5 2.4 6.8 2.6 7 4 C8 4 8.3 4.6 8.2 5.4 C8.1 6.2 7.5 6.5 7 6.5 Z" stroke="#fff" stroke-width="0.7" fill="#fff"/></svg>
  <svg class="a" style="left:104.9px;top:35px" width="8" height="6" viewBox="0 0 8 6"><path d="M0.5 0.5 H3 L3.8 1.3 H7.5 V5.5 H0.5 Z" stroke="#c4c4c4" stroke-width="0.9" fill="none"/></svg>
  <div class="a pre" style="left:115px;top:34px;font-size:5.1px;line-height:8px;color:#e3e3e3">dev</div>
  <svg class="a" style="left:131.2px;top:35px" width="8" height="6" viewBox="0 0 8 6"><path d="M0.5 0.5 H3 L3.8 1.3 H7.5 V5.5 H0.5 Z" stroke="#c4c4c4" stroke-width="0.9" fill="none"/></svg>
  <div class="a pre" style="left:140.9px;top:34px;font-size:5.1px;line-height:8px;color:#e3e3e3">good political shit</div>
  <svg class="a" style="left:187px;top:35px" width="8" height="6" viewBox="0 0 8 6"><path d="M0.5 0.5 H3 L3.8 1.3 H7.5 V5.5 H0.5 Z" stroke="#c4c4c4" stroke-width="0.9" fill="none"/></svg>
  <div class="a pre" style="left:197.8px;top:34px;font-size:5.1px;line-height:8px;color:#e3e3e3">Lucee</div>
  <svg class="a" style="left:216.7px;top:34px" width="8" height="8" viewBox="0 0 9 9"><rect x="0.5" y="0.5" width="5" height="6" fill="#4285f4"/><rect x="3.5" y="2.5" width="5" height="6" fill="#e8e8e8"/><path d="M1.5 4.5 L3 1.8 L4.4 4.5" stroke="#fff" stroke-width="0.6" fill="none"/></svg>
  <svg class="a" style="left:229.6px;top:34px" width="8" height="8" viewBox="0 0 9 9"><circle cx="4.5" cy="4.5" r="4.2" fill="#f0f0f0"/><path d="M3 8.2 V6.6 C2 6.4 1.8 5.6 1.8 4.6 C1.8 3.8 2.2 3.2 2.6 3 L2.5 1.9 L3.6 2.5 C4.2 2.3 4.8 2.3 5.4 2.5 L6.5 1.9 L6.4 3 C6.8 3.2 7.2 3.8 7.2 4.6 C7.2 5.6 7 6.4 6 6.6 V8.2" fill="#1a1a1a"/></svg>
  <svg class="a" style="left:244px;top:35px" width="8" height="6" viewBox="0 0 8 6"><path d="M0.5 0.5 H3 L3.8 1.3 H7.5 V5.5 H0.5 Z" stroke="#c4c4c4" stroke-width="0.9" fill="none"/></svg>
  <div class="a pre" style="left:253.8px;top:34px;font-size:5.1px;line-height:8px;color:#e3e3e3">projects</div>
  <div class="a" style="left:277.9px;top:34px;width:7.5px;height:8px;background:#0e0e0e;border-radius:2px"></div>
  <svg class="a" style="left:279px;top:35.5px" width="5.5" height="5" viewBox="0 0 6 6"><path d="M0.5 0.5 L3 2.5 L5.5 0.5 V5.5 H0.5 Z M3 0.5 V5.5" stroke="#e0e0e0" stroke-width="0.8" fill="none"/></svg>
  <div class="a pre" style="left:287.7px;top:34px;font-size:5.1px;line-height:8px;color:#e3e3e3">Perplexity</div>
    <div class="a" style="left:0;top:44.8px;width:304px;height:1.7px;background:#0a0a0a"></div>
  <!-- page -->
  <div class="a" style="left:0;top:46.5px;width:304px;height:162.5px;background:#ffffff"></div>
  <div class="a" style="left:0;top:46.5px;width:2px;height:162.5px;background:linear-gradient(90deg,#d8d8d8,#f6f6f6)"></div>
  <div class="a pre" style="left:3px;top:50px;font-family:'Liberation Serif',serif;font-weight:bold;font-size:13.15px;line-height:15px;color:#000">Hello from Lucee!</div>
  <div class="a pre" style="left:3px;top:72.5px;font-family:'Liberation Serif',serif;font-size:6.62px;line-height:9px;color:#111;-webkit-text-stroke-width:0.1px">Tuesday, February 10, 2026, 5:13:45 PM Coordinated Universal Time</div>
</div>
<div class="a" style="left:384px;top:0;width:2px;height:13px;background:#18437f"></div>
<div class="a" style="left:384px;top:13px;width:1px;height:409px;background:#2a2a2a"></div>
<div class="a" style="left:385px;top:13px;width:1px;height:196px;background:#3a3a3a"></div>
<div class="a" style="left:385px;top:46.5px;width:1px;height:162.5px;background:#a8a8a8"></div>
<div class="a" style="left:385px;top:209px;width:1px;height:213px;background:#2a2a2a"></div>
<div id="term" class="a">
  <div class="a" style="left:0;top:0;width:304px;height:213px;background:#1c1c1c"></div>
  <div class="a" style="left:2.3px;top:3.7px;width:98px;height:20px;background:#0c0c0c;border-radius:3px 3px 0 0"></div>
  <div class="a" style="left:0;top:19px;width:304px;height:194px;background:#0c0c0c"></div>
  <svg class="a" style="left:5.5px;top:7.8px" width="8" height="6" viewBox="0 0 8 6"><path d="M1.5 0 H8 L6.5 6 H0 Z" fill="#2c7ad6"/><path d="M2 1.2 L3.8 2.8 L1.8 4.3 M3.8 4.5 H5.5" stroke="#fff" stroke-width="0.6" fill="none"/></svg>
  <div class="a pre" style="left:17.1px;top:7px;font-size:5.25px;line-height:7px;color:#ffffff">Windows PowerShell</div>
  <svg class="a" style="left:89.5px;top:7.5px" width="6" height="6" viewBox="0 0 6 6"><path d="M0.7 0.7 L5.3 5.3 M5.3 0.7 L0.7 5.3" stroke="#e0e0e0" stroke-width="0.8"/></svg>
  <svg class="a" style="left:107.5px;top:7.5px" width="6" height="6" viewBox="0 0 6 6"><path d="M3 0.5 V5.5 M0.5 3 H5.5" stroke="#b8b8b8" stroke-width="0.8"/></svg>
  <svg class="a" style="left:119.5px;top:9px" width="5" height="3.5" viewBox="0 0 5 3.5"><path d="M0.6 0.6 L2.5 2.6 L4.4 0.6" stroke="#b8b8b8" stroke-width="0.8" fill="none"/></svg>
  <div class="a mono pre" style="left:2.8px;top:21.40px;font-size:5.5px;line-height:6.17px"><span style="color:#3b8eea">lucee-1  | </span><span style="color:#cccccc">"INFO","main","02/10/2026","17:17:56","","extension","Update Startup Hook [class org.lu</span></div>
  <div class="a mono pre" style="left:2.8px;top:27.57px;font-size:5.5px;line-height:6.17px"><span style="color:#cccccc">ugger.extension.ExtensionActivator;maven:org.lucee:debugger:3.0.0.1-SNAPSHOT;] from extension</span></div>
  <div class="a mono pre" style="left:2.8px;top:33.74px;font-size:5.5px;line-height:6.17px"><span style="color:#cccccc">.0.0.1-SNAPSHOT]"</span></div>
  <div class="a mono pre" style="left:2.8px;top:39.91px;font-size:5.5px;line-height:6.17px"><span style="color:#3b8eea">lucee-1  | </span><span style="color:#3b8eea">[luceedebug]</span><span style="color:#cccccc"> Extension activating</span></div>
  <div class="a mono pre" style="left:2.8px;top:46.08px;font-size:5.5px;line-height:6.17px"><span style="color:#3b8eea">lucee-1  | </span><span style="color:#3b8eea">[luceedebug]</span><span style="color:#cccccc"> Native mode: true</span></div>
  <div class="a mono pre" style="left:2.8px;top:52.25px;font-size:5.5px;line-height:6.17px"><span style="color:#3b8eea">lucee-1  | </span><span style="color:#3b8eea">[luceedebug]</span><span style="color:#cccccc"> Native mode, DAP server starting on 0.0.0.0:10000</span></div>
  <div class="a mono pre" style="left:2.8px;top:58.42px;font-size:5.5px;line-height:6.17px"><span style="color:#3b8eea">lucee-1  | </span><span style="color:#cccccc">[luceedebug] DAP server thread started</span></div>
  <div class="a mono pre" style="left:2.8px;top:64.59px;font-size:5.5px;line-height:6.17px"><span style="color:#3b8eea">lucee-1  | </span><span style="color:#cccccc">[luceedebug] Calling DapServer.createForSocket on 0.0.0.0:10000</span></div>
  <div class="a mono pre" style="left:2.8px;top:70.76px;font-size:5.5px;line-height:6.17px"><span style="color:#3b8eea">lucee-1  | </span><span style="color:#cccccc">"INFO","main","02/10/2026","17:17:56","","request","Successfully installed the features</span></div>
  <div class="a mono pre" style="left:2.8px;top:76.93px;font-size:5.5px;line-height:6.17px"><span style="color:#cccccc">B0188-8383-4289-AC055A356BED5281;name=PostgreSQL JDBC Driver;version=42.7.9, 8737ABC4-D43F-4</span></div>
  <div class="a mono pre" style="left:2.8px;top:83.10px;font-size:5.5px;line-height:6.17px"><span style="color:#cccccc">me=Image Extension for Jakarta EE (Lucee 7+);version=3.0.0.9, 99A4EF8D-F2FD-40C8-8FB8C2E67A</span></div>
  <div class="a mono pre" style="left:2.8px;top:89.27px;font-size:5.5px;line-height:6.17px"><span style="color:#cccccc">L Server (Vendor Microsoft);version=13.2.1, 37C61C0A-5D7E-4256-8572639BE0CF5818;name=Guard e</span></div>
  <div class="a mono pre" style="left:2.8px;top:95.44px;font-size:5.5px;line-height:6.17px"><span style="color:#cccccc">13-RC, 97EB5427-F051-4684-91E8A60B85C5203F;name=Lucee Scheduler (Classic);version=1.0.0.1, 8</span></div>
  <div class="a mono pre" style="left:2.8px;top:101.61px;font-size:5.5px;line-height:6.17px"><span style="color:#cccccc">5678F07D817;name=Compress Tags and functions for Jakarta EE (Lucee 7+);version=2.1.0.1-RC, 5</span></div>
  <div class="a mono pre" style="left:2.8px;top:107.78px;font-size:5.5px;line-height:6.17px"><span style="color:#cccccc">DF8DD8A844D;name=Mail Extension;version=1.1.0.3-RC, 7E673D15-D87C-41A6-885F1956520C605F;name</span></div>
  <div class="a mono pre" style="left:2.8px;top:113.95px;font-size:5.5px;line-height:6.17px"><span style="color:#cccccc">ion=9.6.0, D46D49C3-EB85-8D97-30BEC2F38561E985;name=Lucee Documentation;version=1.0.0.6, C0</span></div>
  <div class="a mono pre" style="left:2.8px;top:120.12px;font-size:5.5px;line-height:6.17px"><span style="color:#cccccc">9973D8A03;name=FTP Extension;version=1.0.0.4-RC, 66E312DD-D083-27C0-64189D16751FD6F0;name=PO</span></div>
  <div class="a mono pre" style="left:2.8px;top:126.29px;font-size:5.5px;line-height:6.17px"><span style="color:#cccccc"> EE (Lucee 7+);version=2.0.0.2, FA79A831-7D30-4D8A-87F308DECE80000!;symbolic-name=debugger;e</span></div>
  <div class="a mono pre" style="left:2.8px;top:132.46px;font-size:5.5px;line-height:6.17px"><span style="color:#cccccc">r Protocol (DAP) debugger for Lucee CFML. Set breakpoints, inspect variables, and step three</span></div>
  <div class="a mono pre" style="left:2.8px;top:138.63px;font-size:5.5px;line-height:6.17px"><span style="color:#cccccc">sion=3.0.0.1-SNAPSHOT, CED6227E-0F49-6367-A68D21AACA6807E8;name=Lucee Administrator;version</span></div>
  <div class="a mono pre" style="left:2.8px;top:144.80px;font-size:5.5px;line-height:6.17px"><span style="color:#cccccc">A94B-E0588D978511E39E;name=S3 Resource Extension;version=2.0.3.1"</span></div>
  <div class="a mono pre" style="left:2.8px;top:150.97px;font-size:5.5px;line-height:6.17px"><span style="color:#3b8eea">lucee-1  | </span><span style="color:#cccccc">[luceedebug] createForSocket entered: host=0.0.0.0, port=10000</span></div>
  <div class="a mono pre" style="left:2.8px;top:157.14px;font-size:5.5px;line-height:6.17px"><span style="color:#3b8eea">lucee-1  | </span><span style="color:#cccccc">[luceedebug] Creating ServerSocket …</span></div>
  <div class="a mono pre" style="left:2.8px;top:163.31px;font-size:5.5px;line-height:6.17px"><span style="color:#3b8eea">lucee-1  | </span><span style="color:#cccccc">[luceedebug] Binding to 0.0.0.0:10000</span></div>
  <div class="a mono pre" style="left:2.8px;top:169.48px;font-size:5.5px;line-height:6.17px"><span style="color:#3b8eea">lucee-1  | </span><span style="color:#cccccc">[luceedebug] DAP server socket bound successfully on 0.0.0.0:10000</span></div>
  <div class="a mono pre" style="left:2.8px;top:175.65px;font-size:5.5px;line-height:6.17px"><span style="color:#3b8eea">lucee-1  | </span><span style="color:#cccccc">[luceedebug] Waiting for DAP client connection on 0.0.0.0:10000 …</span></div>
  <div class="a mono pre" style="left:2.8px;top:181.82px;font-size:5.5px;line-height:6.17px"><span style="color:#3b8eea">lucee-1  | </span><span style="color:#cccccc">[luceedebug] ServerSocket state: bound=true, closed=false, localPort=10000</span></div>
  <div class="a mono pre" style="left:2.8px;top:187.99px;font-size:5.5px;line-height:6.17px"><span style="color:#3b8eea">lucee-1  | </span><span style="color:#cccccc">[luceedebug] Calling server.accept() …</span></div>
  <div class="a mono pre" style="left:2.8px;top:194.16px;font-size:5.5px;line-height:6.17px"><span style="color:#3b8eea">lucee-1  | </span><span style="color:#cccccc">"INFO","main","02/10/2026","17:17:56","","startup","Touched monitors"</span></div>
  <div class="a mono pre" style="left:2.8px;top:200.33px;font-size:5.5px;line-height:6.17px"><span style="color:#3b8eea">lucee-1  | </span><span style="color:#cccccc">"INFO","main","02/10/2026","17:17:56","","startup","Start CFML Controller"</span></div>

  <div class="a" style="left:0;top:212px;width:304px;height:1px;background:#3a3a3a"></div>
</div>
<div class="a" style="left:0;top:421px;width:690px;height:1px;background:#474747"></div>
</body></html>
